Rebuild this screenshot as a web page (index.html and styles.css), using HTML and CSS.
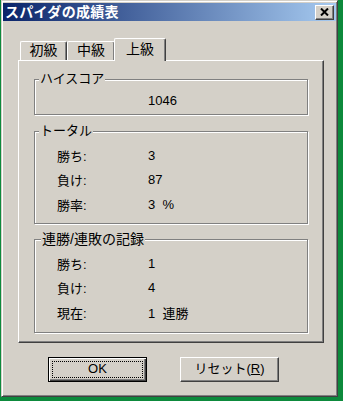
FILE: index.html
```html
<!DOCTYPE html>
<html lang="ja">

<head>
    <meta charset="utf-8">
    <meta name="viewport" content="width=device-width, initial-scale=1.0">
    <title>スパイダの成績表</title>
    <link rel="stylesheet" href="styles.css">
</head>

<body>

    <div class="window">
        <div class="titlebar">
            <span class="title">スパイダの成績表</span>
            <div class="close">
                <svg width="9" height="8" viewBox="0 0 9 8">
                    <path d="M1 0.5 L8 7.5 M8 0.5 L1 7.5" stroke="#000" stroke-width="2" fill="none" />
                </svg>
            </div>
        </div>

        <div class="content">
            <div class="tabs">
                <div class="tab t1">初級</div>
                <div class="tab t2">中級</div>
                <div class="tab valgt">上級</div>
            </div>

            <div class="panel">
                <div class="group g1">
                    <div class="legend">ハイスコア</div>
                    <div class="rows first">
                        <span></span><span>1046</span>
                    </div>
                </div>

                <div class="group g2">
                    <div class="legend">トータル</div>
                    <div class="rows">
                        <span>勝ち:</span><span>3</span>
                        <span>負け:</span><span>87</span>
                        <span>勝率:</span><span>3&nbsp;&nbsp;%</span>
                    </div>
                </div>

                <div class="group g3">
                    <div class="legend wide">連勝/連敗の記録</div>
                    <div class="rows">
                        <span>勝ち:</span><span>1</span>
                        <span>負け:</span><span>4</span>
                        <span>現在:</span><span>1&nbsp;&nbsp;連勝</span>
                    </div>
                </div>
            </div>

            <div class="buttons">
                <div class="knap ok">OK</div>
                <div class="knap">リセット(<u>R</u>)</div>
            </div>
        </div>
    </div>

</body>

</html>
```

FILE: styles.css
```css
body {
    margin: 0;
    background-color: #0d8a3c;
    font-family: "Liberation Sans", "Noto Sans CJK JP", sans-serif;
    font-size: 13px;
    color: #000;
}

.window {
    box-sizing: border-box;
    width: 337px;
    height: 397px;
    margin-left: 1px;
    padding: 2px 1px 1px 1px;
    background-color: #d4d0c8;
    border: 1px solid;
    border-color: #d4d0c8 #404040 #404040 #d4d0c8;
    box-shadow: inset 1px 1px #fff, inset -1px -1px #808080;
}

.titlebar {
    height: 18px;
    display: flex;
    align-items: center;
    justify-content: space-between;
    padding-left: 2px;
    padding-right: 2px;
    background: linear-gradient(to right, #0a246a, #a6caf0);
}

.title {
    color: #fff;
    font-weight: bold;
    font-size: 14px;
    line-height: 18px;
    letter-spacing: 0.3px;
}

.close {
    box-sizing: border-box;
    width: 19px;
    height: 15px;
    display: flex;
    align-items: center;
    justify-content: center;
    background-color: #d4d0c8;
    border: 1px solid;
    border-color: #fff #404040 #404040 #fff;
    box-shadow: inset -1px -1px #808080;
}

.content {
    padding: 17px 0 0 15px;
}

.tabs {
    height: 22px;
    display: flex;
    align-items: flex-end;
    padding-left: 2px;
    font-size: 14px;
}

.tab {
    box-sizing: border-box;
    height: 19px;
    line-height: 17px;
    text-align: center;
    border-top: 1px solid #fff;
    border-left: 1px solid #fff;
    border-right: 1px solid #404040;
    box-shadow: inset -1px 0 #808080;
    border-radius: 2px 2px 0 0;
}

.t1 {
    width: 47px;
}

.t2 {
    width: 48px;
}

.valgt {
    position: relative;
    z-index: 1;
    width: 52px;
    height: 23px;
    margin: 0 -2px -1px -1px;
    line-height: 20px;
    background-color: #d4d0c8;
}

.panel {
    box-sizing: border-box;
    width: 306px;
    height: 283px;
    padding: 0 15px;
    border: 1px solid;
    border-color: #fff #404040 #404040 #fff;
    box-shadow: inset -1px -1px #808080;
}

.group {
    box-sizing: border-box;
    border: 1px solid #808080;
    box-shadow: inset 1px 1px #fff, 1px 1px #fff;
}

.g1 {
    height: 36px;
    margin-top: 18px;
}

.g2 {
    height: 93px;
    margin-top: 16px;
}

.g3 {
    height: 94px;
    margin-top: 15px;
}

.legend {
    width: fit-content;
    margin: -8px 0 0 4px;
    padding: 0 1px;
    line-height: 14px;
    background-color: #d4d0c8;
}

.legend.wide {
    margin-left: 6px;
    font-size: 14px;
}

.rows {
    display: grid;
    grid-template-columns: 91px auto;
    grid-auto-rows: 24.5px;
    align-items: center;
    margin-top: 5px;
    padding-left: 22px;
}

.rows.first {
    margin-top: 2px;
    grid-auto-rows: 24px;
}

.buttons {
    display: flex;
    gap: 33px;
    margin-top: 14px;
    padding-left: 30px;
}

.knap {
    box-sizing: border-box;
    width: 99px;
    height: 25px;
    line-height: 22px;
    text-align: center;
    background-color: #d4d0c8;
    border: 1px solid;
    border-color: #fff #404040 #404040 #fff;
    box-shadow: inset -1px -1px #808080;
}

.ok {
    border: 1px solid #000;
    box-shadow: inset 1px 1px #fff, inset -1px -1px #404040, inset -2px -2px #808080;
    outline: 1px dotted #000;
    outline-offset: -5px;
}
```
